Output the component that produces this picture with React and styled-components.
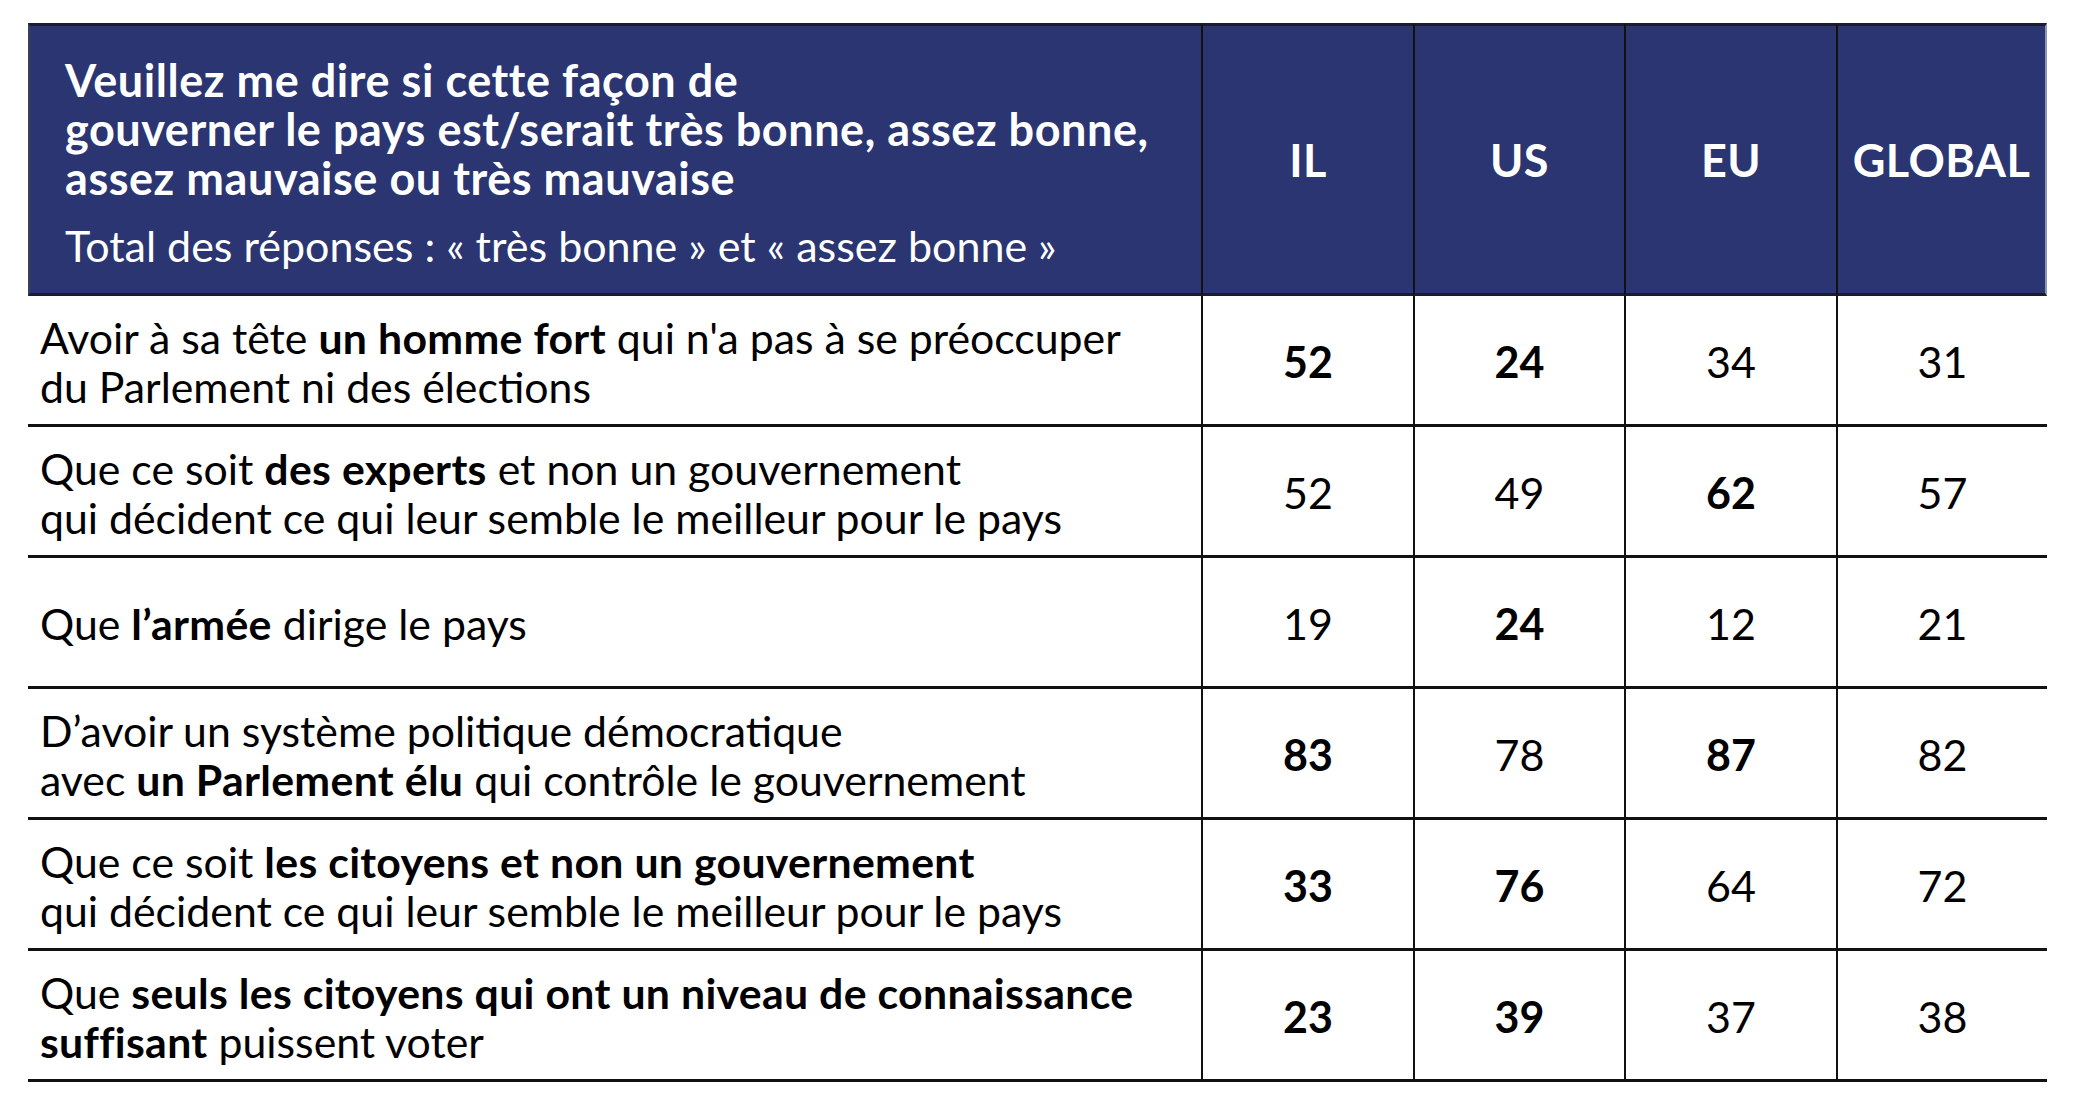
import React from "react";
import styled, { createGlobalStyle } from "styled-components";

const Global = createGlobalStyle`
  html, body { margin: 0; padding: 0; background: #ffffff; }
  body { font-family: Lato, "Noto Sans", sans-serif; color: #000; }
`;

const Page = styled.div`
  padding: 23px 0 0 28px;
  width: 2074px;
  height: 1106px;
  box-sizing: border-box;
`;

const Table = styled.div`
  display: grid;
  grid-template-columns: 1173px 212px 211px 212px 211px;
  width: 2019px;
`;

const HeadCell = styled.div`
  background: #2a3572;
  color: #fff;
  box-sizing: border-box;
  height: 273px;
  border-top: 3px solid #1b1d2e;
  border-bottom: 3px solid #1b1d2e;
  border-left: 2px solid ${(p) => (p.$first ? "#3a3f5a" : "#111")};
  border-right: ${(p) => (p.$last ? "2px solid #8f97b8" : "none")};
  display: flex;
  align-items: center;
  justify-content: center;
`;

const HeadTitleBox = styled.div`
  display: flex;
  flex-direction: column;
  align-self: stretch;
  justify-content: center;
  width: 100%;
  padding: 6px 0 0 35px;
  box-sizing: border-box;
  gap: 18px;
`;

const Title = styled.div`
  font-weight: 700;
  font-size: 45px;
  letter-spacing: 0.55px;
  line-height: 49px;
  white-space: nowrap;
`;

const Subtitle = styled.div`
  font-weight: 400;
  font-size: 43px;
  line-height: 49px;
  white-space: nowrap;
`;

const ColLabel = styled.div`
  font-weight: 700;
  font-size: 45px;
  letter-spacing: 0.4px;
`;

const LabelCell = styled.div`
  box-sizing: border-box;
  height: 131px;
  border-bottom: 3px solid #111;
  display: flex;
  align-items: center;
  padding: 3px 0 0 12px;
  font-size: 42.8px;
  line-height: 49px;
  white-space: nowrap;
`;

const ValueCell = styled.div`
  box-sizing: border-box;
  height: 131px;
  border-bottom: 3px solid #111;
  border-left: 2px solid #111;
  display: flex;
  align-items: center;
  justify-content: center;
  padding-top: 3px;
  font-size: 43px;
  font-weight: ${(p) => (p.$bold ? 700 : 400)};
`;

const B = styled.strong`
  font-weight: 700;
  letter-spacing: 0.3px;
`;

const rows = [
  {
    label: (
      <>
        Avoir à sa tête <B>un homme fort</B> qui n'a pas à se préoccuper
        <br />
        du Parlement ni des élections
      </>
    ),
    values: [
      [52, true],
      [24, true],
      [34, false],
      [31, false],
    ],
  },
  {
    label: (
      <>
        Que ce soit <B>des experts</B> et non un gouvernement
        <br />
        qui décident ce qui leur semble le meilleur pour le pays
      </>
    ),
    values: [
      [52, false],
      [49, false],
      [62, true],
      [57, false],
    ],
  },
  {
    label: (
      <>
        Que <B>l’armée</B> dirige le pays
      </>
    ),
    values: [
      [19, false],
      [24, true],
      [12, false],
      [21, false],
    ],
  },
  {
    label: (
      <>
        D’avoir un système politique démocratique
        <br />
        avec <B>un Parlement élu</B> qui contrôle le gouvernement
      </>
    ),
    values: [
      [83, true],
      [78, false],
      [87, true],
      [82, false],
    ],
  },
  {
    label: (
      <>
        Que ce soit <B>les citoyens et non un gouvernement</B>
        <br />
        qui décident ce qui leur semble le meilleur pour le pays
      </>
    ),
    values: [
      [33, true],
      [76, true],
      [64, false],
      [72, false],
    ],
  },
  {
    label: (
      <>
        Que <B>seuls les citoyens qui ont un niveau de connaissance</B>
        <br />
        <B>suffisant</B> puissent voter
      </>
    ),
    values: [
      [23, true],
      [39, true],
      [37, false],
      [38, false],
    ],
  },
];

const columns = ["IL", "US", "EU", "GLOBAL"];

export default function App() {
  return (
    <>
      <Global />
      <Page>
        <Table>
          <HeadCell $first>
            <HeadTitleBox>
              <Title>
                Veuillez me dire si cette façon de
                <br />
                gouverner le pays est/serait très bonne, assez bonne,
                <br />
                assez mauvaise ou très mauvaise
              </Title>
              <Subtitle>Total des réponses : « très bonne » et « assez bonne »</Subtitle>
            </HeadTitleBox>
          </HeadCell>
          {columns.map((c, i) => (
            <HeadCell key={c} $last={i === columns.length - 1}>
              <ColLabel>{c}</ColLabel>
            </HeadCell>
          ))}
          {rows.map((r, ri) => (
            <React.Fragment key={ri}>
              <LabelCell>
                <div>{r.label}</div>
              </LabelCell>
              {r.values.map(([v, b], vi) => (
                <ValueCell key={vi} $bold={b}>
                  {v}
                </ValueCell>
              ))}
            </React.Fragment>
          ))}
        </Table>
      </Page>
    </>
  );
}
